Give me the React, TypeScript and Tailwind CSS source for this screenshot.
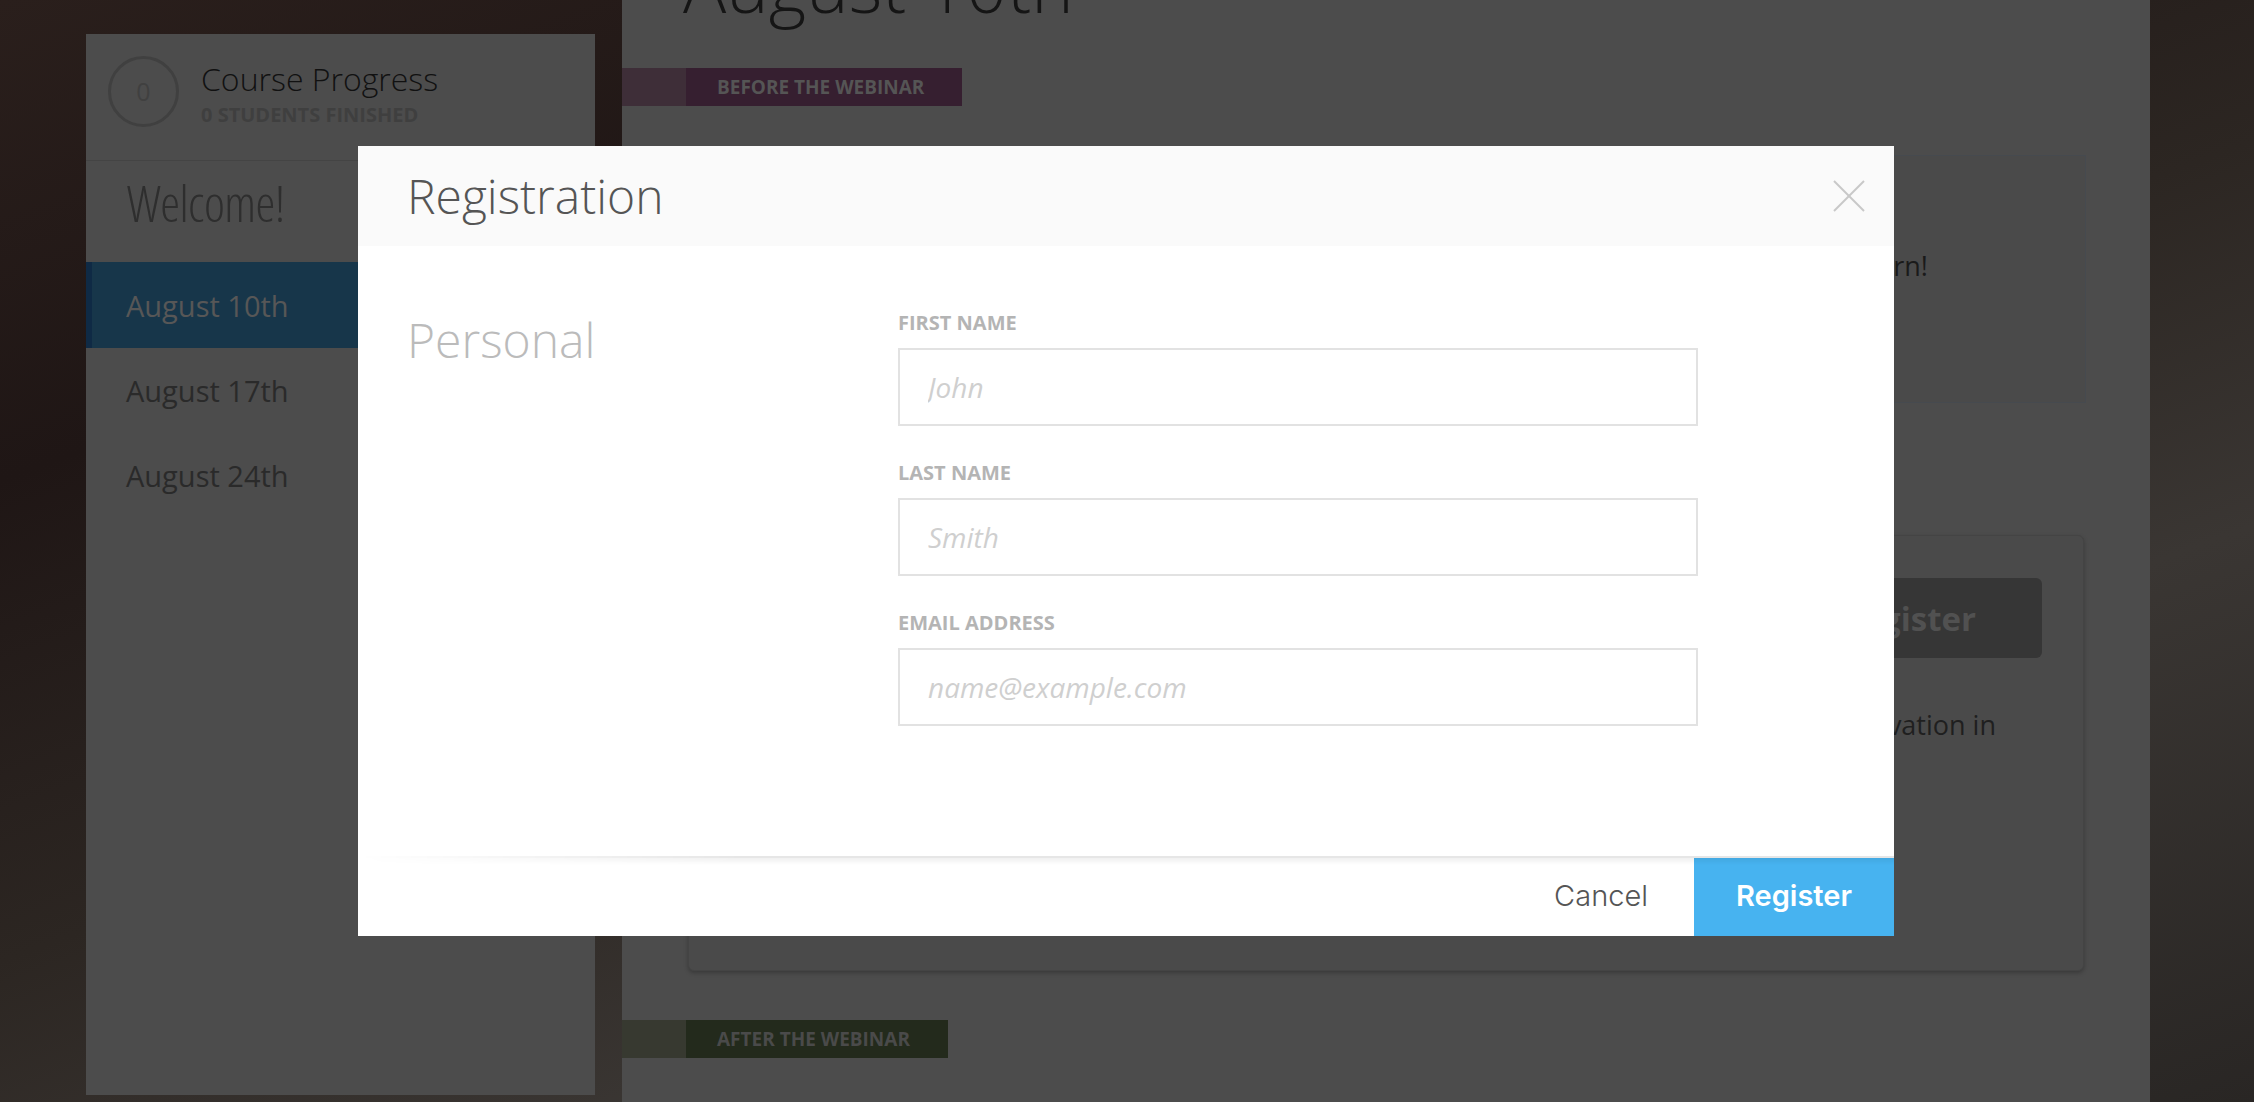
import React from "react";

function CloseIcon() {
  return (
    <svg width="32" height="32" viewBox="0 0 32 32" fill="none">
      <line x1="1" y1="1" x2="31" y2="31" stroke="#c8c8c8" strokeWidth="2" />
      <line x1="31" y1="1" x2="1" y2="31" stroke="#c8c8c8" strokeWidth="2" />
    </svg>
  );
}

function Field({ label, placeholder, first }: { label: string; placeholder: string; first?: boolean }) {
  return (
    <div className={first ? "" : "mt-[37px]"}>
      <div className="text-[20px] leading-[20px] font-bold text-[#b4b4b4] uppercase mb-[15px]">{label}</div>
      <input
        className="w-[800px] h-[78px] border-2 border-[#e2e2e2] bg-white pl-[28px] text-[28px] italic outline-none placeholder:text-[#cfcfcf] placeholder:italic font-['Open_Sans',sans-serif]"
        placeholder={placeholder}
      />
    </div>
  );
}

export default function App() {
  return (
    <div className="relative w-[2254px] h-[1102px] overflow-hidden font-['Open_Sans',sans-serif] bg-[linear-gradient(160deg,#2a1f1c_0%,#1f1615_25%,#2c2622_50%,#3a3633_70%,#292624_100%)]">
      <div className="flex pl-[86px]">
        {/* Sidebar */}
        <div className="w-[509px] h-[1061px] mt-[34px] bg-[#4c4c4c] flex flex-col shrink-0">
          <div className="h-[127px] flex items-start pt-[22px] pl-[22px] border-b border-[#444444]">
            <div className="w-[71px] h-[71px] rounded-full border-[3px] border-[#404040] flex items-center justify-center text-[25px] text-[#404040] shrink-0">
              0
            </div>
            <div className="ml-[22px] mt-[7px] flex flex-col">
              <div className="text-[32px] leading-none font-light text-[#111111]">Course Progress</div>
              <div className="mt-[10px] text-[20px] leading-none font-bold text-[#3f3f3f] uppercase">0 Students Finished</div>
            </div>
          </div>
          <div className="h-[101px] pl-[41px] pt-[17px]">
            <div className="text-[50px] leading-none font-light font-stretch-[75%] text-[#2e2e2e] tracking-[-0.5px]">Welcome!</div>
          </div>
          <div className="h-[86px] flex items-center border-l-[6px] border-[#0f2a45] bg-[#17364a] pl-[34px]">
            <span className="text-[29px] leading-none text-[#575757]">August 10th</span>
          </div>
          <div className="h-[85px] flex items-center pl-[40px]">
            <span className="text-[29px] leading-none text-[#2a2a2a]">August 17th</span>
          </div>
          <div className="h-[85px] flex items-center pl-[40px]">
            <span className="text-[29px] leading-none text-[#2a2a2a]">August 24th</span>
          </div>
        </div>

        {/* Main */}
        <div className="w-[1528px] ml-[27px] h-[1102px] bg-[#4c4c4c] flex flex-col shrink-0">
          <div className="mt-[-51px] ml-[61px] text-[72px] leading-none font-light text-[#151515]">August 10th</div>
          <div className="mt-[47px] flex h-[38px]">
            <div className="w-[64px] bg-[#3e2e38]" />
            <div className="w-[276px] bg-[#361f30] pl-[31px] flex items-center text-[19px] font-bold text-[#555555] uppercase leading-none">
              Before the webinar
            </div>
          </div>
          <div className="mt-[49px] ml-[65px] w-[1399px] h-[248px] border border-[#464a4f] bg-[#4a4a4a] flex justify-end items-start pr-[157px] pt-[89px]">
            <p className="text-[27px] leading-[42px] text-[#1a1a1a]">Sign up below to save your seat, and get ready to learn!</p>
          </div>
          <div className="mt-[132px] ml-[66px] w-[1396px] h-[436px] rounded-md bg-[#4a4a4a] border border-[#444444] shadow-[0_2px_4px_rgba(0,0,0,0.25)] flex flex-col items-end pr-[41px] pt-[42px]">
            <div className="h-[80px] px-[66px] bg-[#363636] rounded-md flex items-center text-[33px] font-bold text-[#515151] leading-none">
              Register
            </div>
            <p className="mt-[47px] mr-[46px] text-[27px] leading-[40px] text-[#1f1f1f]">You will receive a confirmation of your reservation in</p>
          </div>
          <div className="mt-[49px] flex h-[38px]">
            <div className="w-[64px] bg-[#373930]" />
            <div className="w-[262px] bg-[#232a1c] pl-[31px] flex items-center text-[19px] font-bold text-[#4a4a4a] uppercase leading-none">
              After the webinar
            </div>
          </div>
        </div>
      </div>

      {/* Modal */}
      <div className="absolute left-[358px] top-[146px] w-[1536px] h-[790px] bg-white flex flex-col">
        <div className="h-[100px] bg-[#fafafa] flex items-center justify-between pl-[49px] pr-[29px] shrink-0">
          <div className="text-[48px] leading-none font-light text-[#555555]">Registration</div>
          <CloseIcon />
        </div>
        <div className="h-[610px] flex pt-[67px] shrink-0">
          <div className="w-[540px] pl-[49px] pt-[3px] text-[48px] leading-none font-light text-[#bbbbbb]">Personal</div>
          <div className="flex flex-col">
            <Field label="First Name" placeholder="John" first />
            <Field label="Last Name" placeholder="Smith" />
            <Field label="Email Address" placeholder="name@example.com" />
          </div>
        </div>
        <div className="relative h-[80px] flex justify-end items-stretch">
          <div className="absolute left-0 top-0 w-full h-[2px] bg-[#e6e6e6] [mask-image:linear-gradient(to_right,transparent,black_25%)]" />
          <div className="absolute left-0 top-[2px] w-full h-[7px] bg-gradient-to-b from-black/[0.06] to-transparent [mask-image:linear-gradient(to_right,transparent,black_25%)]" />
          <div className="flex items-center pr-[46px] font-['Inter',sans-serif] font-light text-[29px] text-[#555555]">Cancel</div>
          <div className="w-[200px] bg-[#47b3f0] flex items-center justify-center font-['Inter',sans-serif] font-semibold text-[29px] text-white">
            Register
          </div>
        </div>
      </div>
    </div>
  );
}
